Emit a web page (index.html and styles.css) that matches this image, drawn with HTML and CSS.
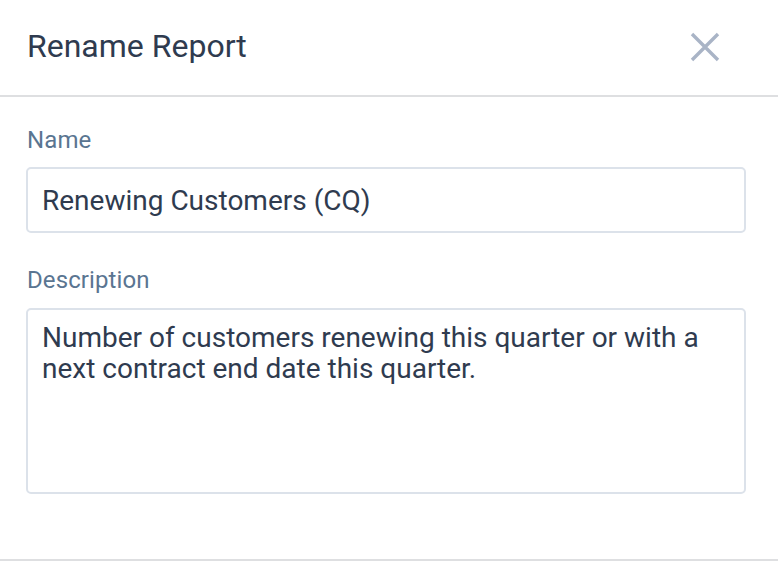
FILE: index.html
```html
<!DOCTYPE html>
<html>
<head>
<meta charset="utf-8">
<link rel="stylesheet" href="styles.css">
</head>
<body>
<div class="modal">
  <header class="modal-header">
    <h1 class="title">Rename Report</h1>
    <button class="close" aria-label="Close">
      <svg width="30" height="30" viewBox="0 0 30 30"><path d="M2 2 L28 28 M28 2 L2 28" stroke="#a9b4c6" stroke-width="3.4" fill="none"/></svg>
    </button>
  </header>
  <div class="modal-body">
    <label class="label">Name</label>
    <div class="field input">Renewing Customers (CQ)</div>
    <label class="label label-desc">Description</label>
    <div class="field textarea">Number of customers renewing this quarter or with a next contract end date this quarter.</div>
  </div>
  <footer class="modal-footer"></footer>
</div>
</body>
</html>
```
FILE: styles.css
```css
* { box-sizing: border-box; }
html, body { margin: 0; padding: 0; background: #fff; }
body { font-family: Roboto, "Noto Sans", sans-serif; color: #2f3b4f; }
.modal { width: 778px; height: 568px; display: flex; flex-direction: column; }
.modal-header {
  height: 97px;
  border-bottom: 2px solid #dedfe1;
  display: flex;
  align-items: flex-start;
  justify-content: space-between;
  padding: 27px 58px 0 27px;
}
.title { margin: 0; font-weight: 400; font-size: 32px; line-height: 38px; color: #2f3b4f; }
.close { background: none; border: 0; padding: 0; width: 30px; height: 30px; display: flex; margin-top: 5px; }
.modal-body { flex: 1; padding: 29px 32px 0 26px; display: flex; flex-direction: column; }
.label { font-size: 24px; line-height: 28px; color: #5a7591; margin-left: 1px; letter-spacing: 0.1px; }
.label-desc { margin-top: 33px; }
.field {
  border: 2px solid #dce2ea;
  border-radius: 5px;
  font-size: 28px;
  color: #2f3b4f;
  padding: 0 14px;
}
.input { margin-top: 13px; height: 66px; display: flex; align-items: center; }
.textarea { margin-top: 14px; height: 186px; padding-top: 12px; line-height: 31px; }
.modal-footer { height: 9px; border-top: 2px solid #dedfe1; }
```
